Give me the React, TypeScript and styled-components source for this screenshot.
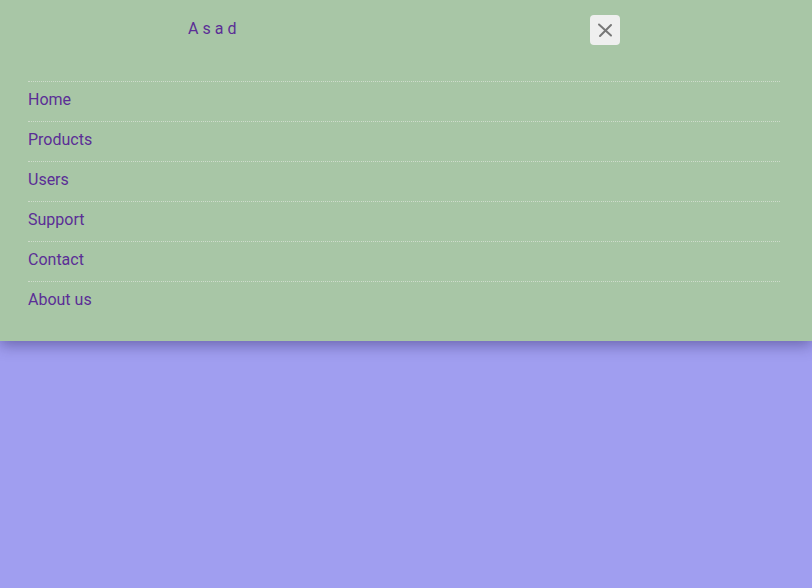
import React from "react";
import styled, { createGlobalStyle } from "styled-components";

const Global = createGlobalStyle`
  html, body { margin: 0; padding: 0; }
  body { background: #a09ef0; font-family: Roboto, "Liberation Sans", sans-serif; }
  #root { min-height: 588px; }
`;

const Panel = styled.div`
  background: #a8c6a6;
  padding: 15px 28px 20px;
  box-shadow: 0 4px 14px rgba(40, 30, 90, 0.45);
  position: relative;
  z-index: 1;
`;

const Header = styled.div`
  display: flex;
  align-items: center;
  height: 30px;
  padding-left: 160px;
`;

const Brand = styled.div`
  font-size: 16px;
  letter-spacing: 4px;
  color: #5b2e96;
  width: 402px;
  margin-top: -4px;
`;

const CloseButton = styled.button`
  width: 30px;
  height: 30px;
  border: none;
  border-radius: 4px;
  background: #efefef;
  display: flex;
  align-items: center;
  justify-content: center;
  padding: 0;
  cursor: pointer;
`;

const Nav = styled.ul`
  list-style: none;
  margin: 36px 0 0;
  padding: 0;
  width: 752px;
`;

const Item = styled.li`
  height: 40px;
  display: flex;
  align-items: center;
  border-top: 1px dotted #cfdccc;
  box-sizing: border-box;
  font-size: 16px;
  color: #5b2e96;
  padding-bottom: 5px;
`;

const items = ["Home", "Products", "Users", "Support", "Contact", "About us"];

export default function App() {
  return (
    <>
      <Global />
      <Panel>
        <Header>
          <Brand>Asad</Brand>
          <CloseButton aria-label="close">
            <svg width="16" height="16" viewBox="0 0 16 16">
              <path d="M2 2.5 L14 13.5 M14 3 L3 14" stroke="#777" strokeWidth="2" strokeLinecap="round" />
            </svg>
          </CloseButton>
        </Header>
        <Nav>
          {items.map((t) => (
            <Item key={t}>{t}</Item>
          ))}
        </Nav>
      </Panel>
    </>
  );
}
